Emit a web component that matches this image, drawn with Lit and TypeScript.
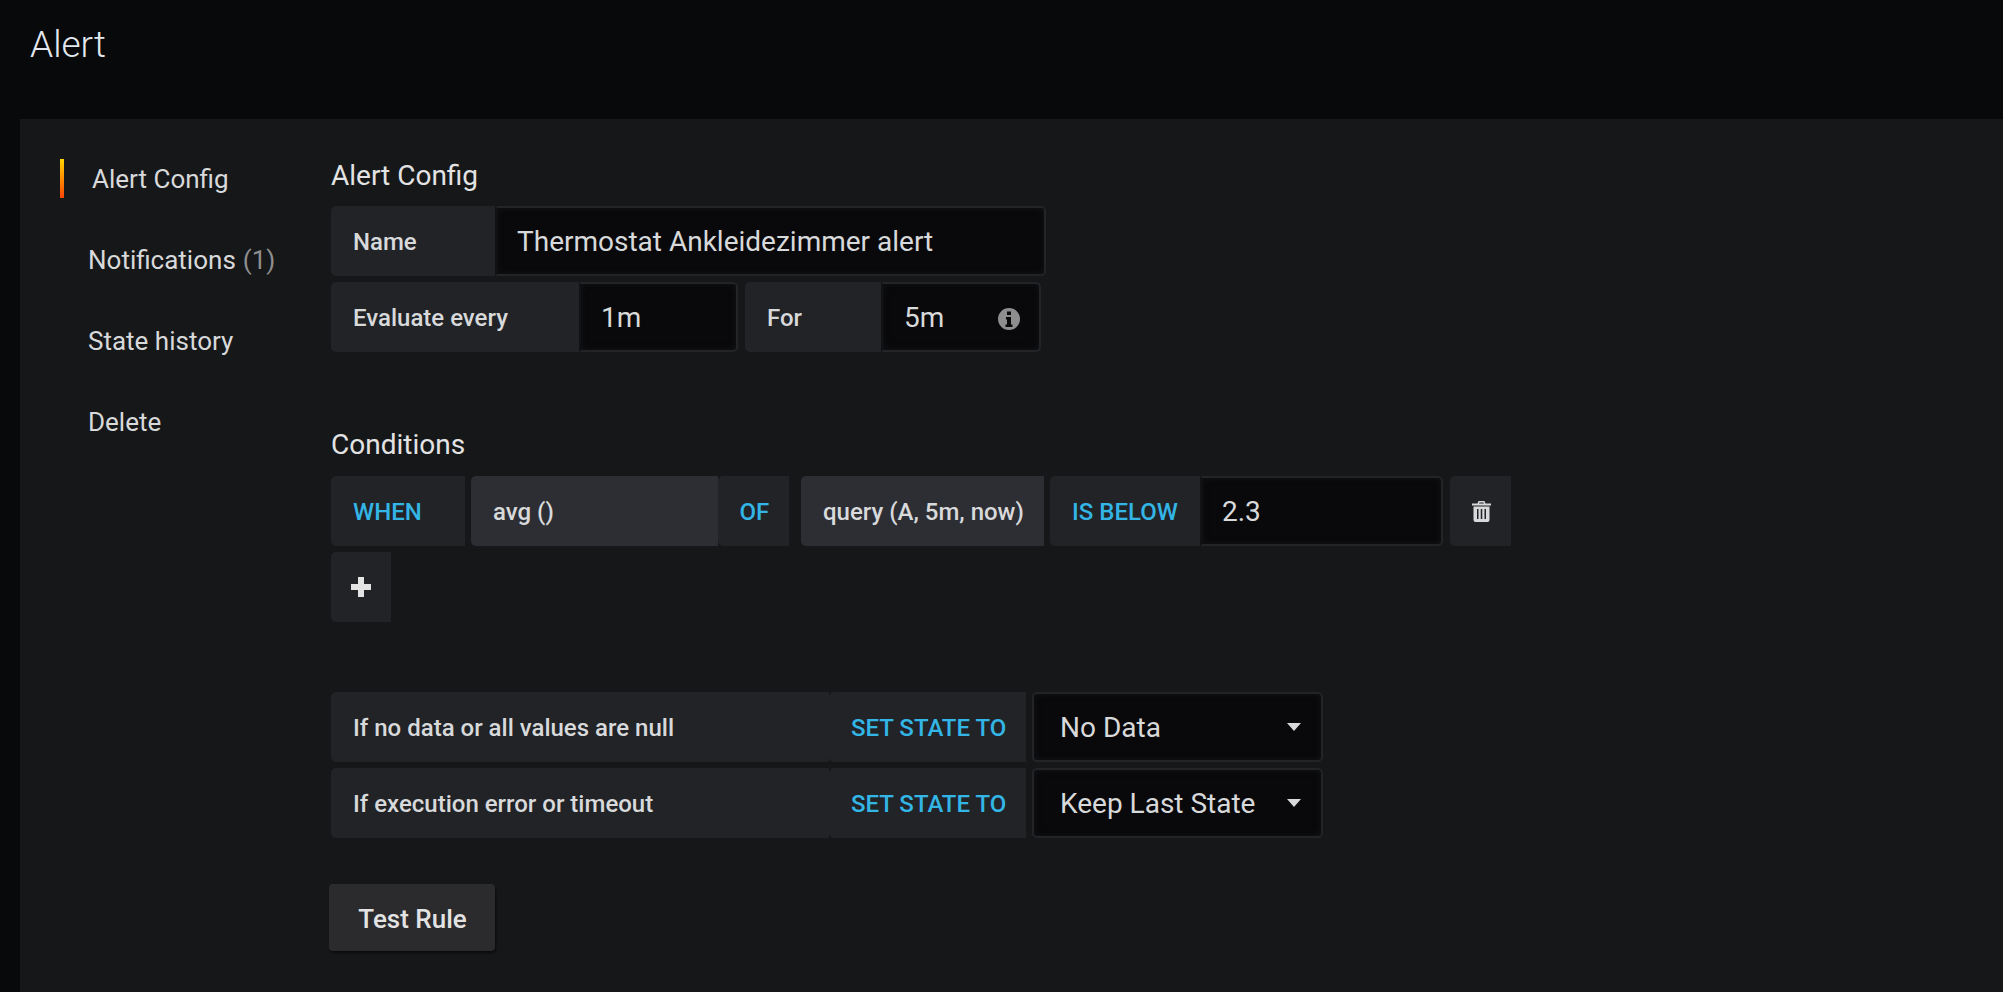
import { css, html, LitElement } from 'lit';
import { customElement } from 'lit/decorators.js';

@customElement('app-root')
export class AppRoot extends LitElement {
  static override styles = css`
    :host {
      display: block;
      height: 992px;
      overflow: hidden;
      background: #08090b;
      font-family: Roboto, 'Liberation Sans', sans-serif;
      color: #d8d9da;
    }
    .page-header {
      height: 119px;
      box-sizing: border-box;
      padding: 22px 0 0 30px;
      font-size: 37px;
      line-height: 46px;
      font-weight: 300;
      color: #e3e8ef;
    }
    .panel {
      margin-left: 20px;
      height: 873px;
      display: flex;
      background: #161719;
    }
    .sidebar {
      width: 311px;
      flex: none;
      box-sizing: border-box;
      padding: 19px 0 0 40px;
    }
    .tab {
      height: 81px;
      display: flex;
      align-items: center;
      padding-left: 28px;
      font-size: 26px;
      color: #d8d9da;
    }
    .tab .count {
      color: #8e8e8e;
      margin-left: 7px;
    }
    .tab.active {
      padding-left: 0;
    }
    .tab.active::before {
      content: '';
      width: 4px;
      height: 39px;
      margin-right: 28px;
      background: linear-gradient(180deg, #ffd500, #ff4400);
    }
    .main {
      flex: 1;
      padding-top: 42px;
    }
    h2 {
      margin: 0 0 15px;
      font-size: 28px;
      line-height: 30px;
      font-weight: 400;
      color: #e3e3e4;
    }
    h2.conditions {
      margin: 78px 0 16px;
    }
    .row {
      display: flex;
      height: 70px;
      margin-bottom: 6px;
    }
    .cell {
      box-sizing: border-box;
      display: flex;
      align-items: center;
      flex: none;
      padding: 2px 0 0 22px;
      font-size: 24px;
      font-weight: 500;
      color: #d8d9da;
      background: #212327;
      border-radius: 5px 0 0 5px;
    }
    .keyword {
      color: #33b5e5;
    }
    .func {
      background: #2d2e34;
    }
    .input {
      box-sizing: border-box;
      display: flex;
      align-items: center;
      flex: none;
      justify-content: space-between;
      font-size: 28px;
      font-weight: 400;
      color: #d8d9da;
      background: #09090b;
      border: 2px solid #232428;
      border-left-color: #111214;
      border-radius: 0 5px 5px 0;
      box-shadow: inset 0 0 6px #141518;
    }
    .standalone {
      border-left-color: #232428;
      border-radius: 5px;
    }
    svg {
      display: block;
      flex: none;
    }
    .plus {
      padding: 0;
      justify-content: center;
    }
    .end {
      margin-bottom: 46px;
    }
    .spaced {
      margin-top: 70px;
    }
    button {
      display: block;
      margin-left: -2px;
      width: 166px;
      height: 67px;
      padding: 3px 0 0 1px;
      border: none;
      border-radius: 4px;
      background: #2b2b2e;
      box-shadow: 1px 2px 2px #0c0c0e;
      color: #e3e3e4;
      font-family: inherit;
      font-size: 26px;
      font-weight: 500;
    }
  `;

  private caret() {
    return html`<svg width="14" height="8" viewBox="0 0 14 8"><path d="M0 0h14L7 8z" fill="#d8d9da"/></svg>`;
  }

  override render() {
    return html`
      <div class="page-header">Alert</div>
      <div class="panel">
        <div class="sidebar">
          <div class="tab active">Alert Config</div>
          <div class="tab">Notifications<span class="count">(1)</span></div>
          <div class="tab">State history</div>
          <div class="tab">Delete</div>
        </div>
        <div class="main">
          <h2>Alert Config</h2>
          <div class="row">
            <div class="cell" style="width:164px">Name</div>
            <div class="input" style="width:551px;padding-left:20px">Thermostat Ankleidezimmer alert</div>
          </div>
          <div class="row">
            <div class="cell" style="width:248px">Evaluate every</div>
            <div class="input" style="width:159px;padding-left:20px">1m</div>
            <div class="cell" style="width:136px;margin-left:7px">For</div>
            <div class="input" style="width:160px;padding:0 19px 0 21px">
              5m
              <svg width="22" height="22" viewBox="0 0 22 22" style="margin-top:4px">
                <circle cx="11" cy="11" r="11" fill="#8e8e8e"/>
                <path d="M9 3.500h4v3.500H9zM8 9h5v7.500h1.500V19h-7v-2.500H9V11.500H8z" fill="#09090b"/>
              </svg>
            </div>
          </div>

          <h2 class="conditions">Conditions</h2>
          <div class="row">
            <div class="cell keyword" style="width:134px">WHEN</div>
            <div class="cell func" style="width:246.500px;margin-left:6px">avg ()</div>
            <div class="cell keyword" style="width:71.500px">OF</div>
            <div class="cell func" style="width:243px;margin-left:12px">query (A, 5m, now)</div>
            <div class="cell keyword" style="width:150px;margin-left:6px">IS BELOW</div>
            <div class="input" style="width:243px;padding-left:20px">2.3</div>
            <div class="cell plus" style="width:61px;margin-left:7px">
              <svg width="19" height="21" viewBox="0 0 19 21" style="margin-left:2px">
                <path fill="#d8d9da" d="M6.500 0h6l1 2.500H19v2H0v-2h5.500zM7.500 1.500 7 2.500h5l-.5-1zM1.500 5.500h16V19a2 2 0 0 1-2 2h-12a2 2 0 0 1-2-2z"/>
                <path fill="#212327" d="M5 8h1.500v10H5zM8.750 8h1.500v10h-1.500zM12.500 8H14v10h-1.500z"/>
              </svg>
            </div>
          </div>
          <div class="row">
            <div class="cell plus" style="width:60px">
              <svg width="20" height="20" viewBox="0 0 20 20">
                <path fill="#e3e3e4" d="M7 0h6v7h7v6h-7v7H7v-7H0V7h7z"/>
              </svg>
            </div>
          </div>

          <div class="row spaced">
            <div class="cell" style="width:498px">If no data or all values are null</div>
            <div class="cell keyword" style="width:197px">SET STATE TO</div>
            <div class="input standalone" style="width:291px;margin-left:6px;padding:0 20px 0 26px">No Data ${this.caret()}</div>
          </div>
          <div class="row end">
            <div class="cell" style="width:498px">If execution error or timeout</div>
            <div class="cell keyword" style="width:197px">SET STATE TO</div>
            <div class="input standalone" style="width:291px;margin-left:6px;padding:0 20px 0 26px">Keep Last State ${this.caret()}</div>
          </div>
          <button>Test Rule</button>
        </div>
      </div>
    `;
  }
}

declare global {
  interface HTMLElementTagNameMap {
    'app-root': AppRoot;
  }
}
